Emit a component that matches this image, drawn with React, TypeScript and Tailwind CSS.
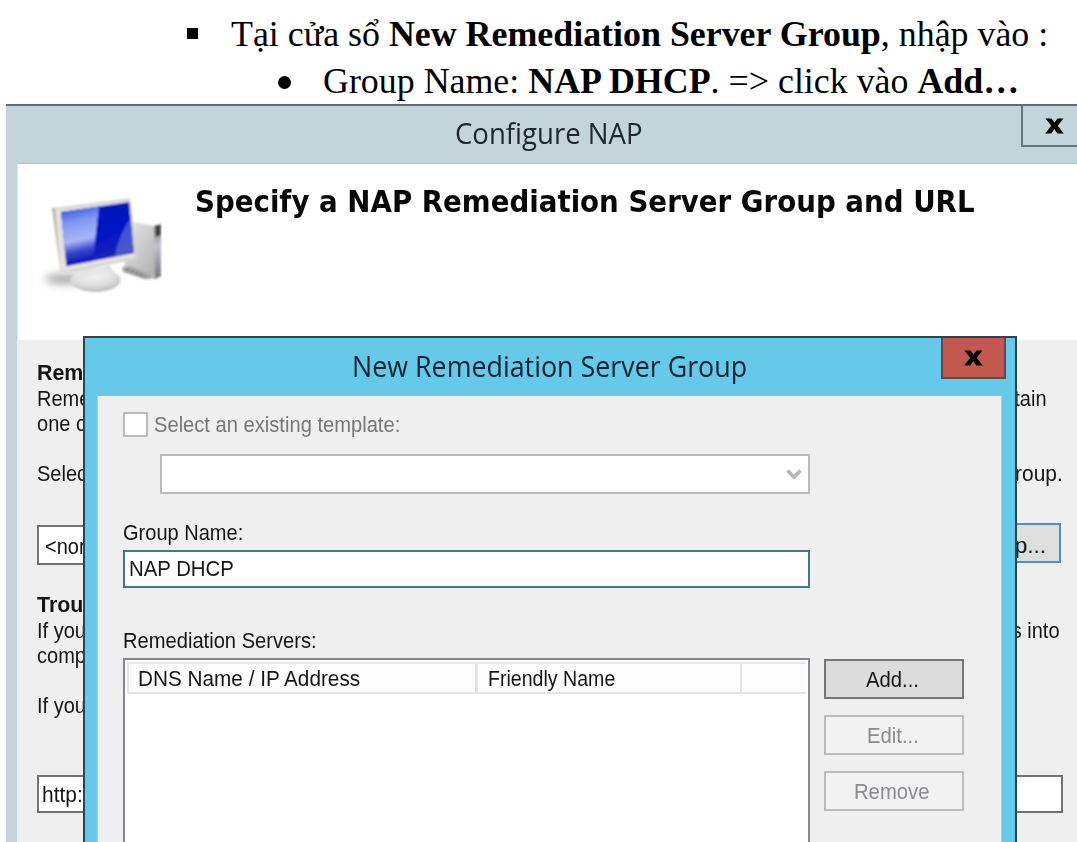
import type { ReactNode } from "react";

function Label({ className = "", children }: { className?: string; children: ReactNode }) {
  return (
    <span
      className={`block h-[25px] origin-left whitespace-pre text-[22.5px] leading-[25px] ${className}`}
    >
      {children}
    </span>
  );
}

function CloseGlyph() {
  return (
    <svg width="19" height="16" viewBox="0 0 19 16" fill="none">
      <path d="M0.5 0.5H6.6L9.5 4.6L12.6 0.5H18.4L12.8 7.8L18.7 15.5H12.4L9.3 11.3L6.2 15.5H0.2L6.2 7.8Z" fill="#050505" />
    </svg>
  );
}

function ComputerIcon() {
  return (
    <svg width="124" height="104" viewBox="0 0 124 104" className="block">
      <defs>
        <linearGradient id="shine" x1="0" y1="0" x2="0.15" y2="1">
          <stop offset="0" stopColor="#2a48d8" />
          <stop offset="0.3" stopColor="#7f98f3" />
          <stop offset="0.62" stopColor="#a9b6f5" />
          <stop offset="0.8" stopColor="#3a48d0" />
          <stop offset="1" stopColor="#0a12b0" />
        </linearGradient>
        <linearGradient id="screen" x1="0" y1="0" x2="0.5" y2="1">
          <stop offset="0" stopColor="#0714b4" />
          <stop offset="0.6" stopColor="#0012c4" />
          <stop offset="1" stopColor="#1a28b8" />
        </linearGradient>
        <linearGradient id="tower" x1="0" y1="0" x2="1" y2="1">
          <stop offset="0" stopColor="#e9e9e9" />
          <stop offset="1" stopColor="#a9a9a9" />
        </linearGradient>
        <linearGradient id="edge" x1="0" y1="0" x2="0" y2="1">
          <stop offset="0" stopColor="#777777" />
          <stop offset="0.4" stopColor="#c3c0cf" />
          <stop offset="1" stopColor="#77757d" />
        </linearGradient>
        <radialGradient id="base" cx="0.45" cy="0.3" r="0.75">
          <stop offset="0" stopColor="#f5f5f5" />
          <stop offset="0.6" stopColor="#dddddd" />
          <stop offset="1" stopColor="#b4b4b4" />
        </radialGradient>
        <filter id="soft" x="-10%" y="-10%" width="120%" height="120%">
          <feGaussianBlur stdDeviation="1" />
        </filter>
        <filter id="shadow" x="-50%" y="-80%" width="200%" height="260%">
          <feGaussianBlur stdDeviation="4" />
        </filter>
      </defs>
      <ellipse cx="27" cy="84" rx="20" ry="5" fill="#777777" opacity="0.65" filter="url(#shadow)" />
      <g filter="url(#soft)">
        <path d="M92 26L116 31L123 29V81L117 84L86 76Z" fill="url(#tower)" />
        <path d="M116 31L123 29V81L117 84Z" fill="url(#edge)" />
        <path d="M117.5 31L122.5 30V40L117.5 42Z" fill="#354039" />
        <path d="M84 72L92 71L113 80V84L106 84L85 77Z" fill="#a5a5a5" />
        <path d="M88 74L108 82" stroke="#777777" strokeWidth="2" strokeDasharray="3 2" />
        <path d="M38 77L72 71L76 79L36 86Z" fill="#d0d0d0" />
        <ellipse cx="57.5" cy="85" rx="25" ry="12" fill="url(#base)" />
        <path d="M37 80C46 73 68 70 76 75L66 79L45 83Z" fill="#e6e6e6" />
        <path d="M14 13L19 12L26 78L23 79Z" fill="#b5b1a8" />
        <path d="M17 13L92 3L99 64L84 67L27 79L23 79Z" fill="#e4e1df" />
        <path d="M19 13.5L91.5 4.5L98 63L27 77" fill="none" stroke="#c8c5c0" strokeWidth="1" />
        <path d="M23 17L91 7L96 58L28.5 71Z" fill="url(#screen)" />
        <path d="M23 17L61 11.5L54.7 66L28.5 71Z" fill="url(#shine)" />
        <path d="M92 24L96 57L77 61C80 46 85 34 92 24Z" fill="#7c8de0" opacity="0.5" />
      </g>
    </svg>
  );
}

function ActionButton({ label, disabled = false }: { label: string; disabled?: boolean }) {
  return (
    <button
      className={
        disabled
          ? "flex h-10 w-[140px] justify-center border-2 border-[#bcbcbc] bg-[#f2f2f2] pt-1.5 pl-1 text-[#8b8b90]"
          : "flex h-10 w-[140px] justify-center border-2 border-[#77777a] bg-[#dcdcdc] pt-1.5 pl-0.5 text-[#151515]"
      }
    >
      <Label className="origin-center scale-x-90">{label}</Label>
    </button>
  );
}

function GroupDialog() {
  return (
    <div className="absolute left-[83px] top-[336px] flex h-[520px] w-[934px] flex-col border-2 border-[#2d444f] bg-[#65caea]">
      <div className="flex h-[57px] shrink-0 items-start">
        <div className="w-[856px] shrink-0 pl-[267px] pt-[8px] font-['Open_Sans',sans-serif] text-[29px] leading-[40px] text-[#06222e]">
          <span className="block w-max origin-left scale-x-[0.925] whitespace-nowrap">New Remediation Server Group</span>
        </div>
        <button className="flex h-[41px] w-[65px] items-center justify-center border-2 border-t-0 border-[#65484b] bg-[#c2584e]">
          <CloseGlyph />
        </button>
      </div>
      <div className="ml-[12px] mr-[13px] flex grow flex-col border border-[#a5d3e1] border-t-[#8dbdce] bg-[#efefef] pl-[25px] pt-4">
        <div className="flex h-[25px] items-center">
          <span className="size-[25px] border-2 border-[#bbbbbb] bg-white" />
          <Label className="ml-1.5 scale-x-[0.895] text-[#77777a]">Select an existing template:</Label>
        </div>
        <div className="ml-[37px] mt-[17px] flex h-10 w-[650px] items-center justify-end border-2 border-[#bbbbbe] bg-white pr-1.5">
          <svg width="16" height="13" viewBox="0 0 16 13" fill="none">
            <path d="M1.5 2.5L8 9L14.5 2.5" stroke="#b7b7b7" strokeWidth="3.8" />
          </svg>
        </div>
        <Label className="mt-[26px] scale-x-[0.89] text-[#151515]">Group Name:</Label>
        <div className="mt-[5px] h-[38px] w-[687px] border-2 border-[#417497] bg-white pl-1 pt-1">
          <Label className="scale-x-[0.905] text-[#151515]">NAP DHCP</Label>
        </div>
        <Label className="mt-[40px] scale-x-[0.895] text-[#151515]">Remediation Servers:</Label>
        <div className="mt-[5px] flex grow gap-[14px]">
          <div className="w-[687px] border-2 border-b-0 border-[#85878f] bg-white p-0.5">
            <div className="flex h-8 border-2 border-r-0 border-[#e6e6e6] bg-[#fcfcfc]">
              <div className="w-[349px] border-r-3 border-[#e3e3e3] pl-[9px] pt-0.5 text-[#151515]">
                <Label className="scale-x-[0.922]">DNS Name / IP Address</Label>
              </div>
              <div className="w-[264px] border-r-2 border-[#e3e3e3] pl-2.5 pt-0.5 text-[#151515]">
                <Label className="scale-x-[0.87]">Friendly Name</Label>
              </div>
            </div>
          </div>
          <div className="flex flex-col gap-4 pt-px">
            <ActionButton label="Add..." />
            <ActionButton label="Edit..." disabled />
            <ActionButton label="Remove" disabled />
          </div>
        </div>
      </div>
    </div>
  );
}

function ConfigureWindow() {
  return (
    <div className="ml-1.5 flex grow flex-col border-t-2 border-[#5f6e73] bg-[#c3d5db]">
      <div className="flex h-[57px] shrink-0">
        <div className="w-[1015px] shrink-0 pl-[449px] pt-[7px] font-['Open_Sans',sans-serif] text-[29px] leading-[40px] text-[#20262a]">
          <span className="block w-max origin-left scale-x-[0.95] whitespace-nowrap">Configure NAP</span>
        </div>
        <button className="flex h-[41px] w-[67px] shrink-0 justify-center border-2 border-t-0 border-[#68747d] pt-[12px]">
          <CloseGlyph />
        </button>
      </div>
      <div className="ml-[11px] flex grow flex-col bg-[#efefef]">
        <div className="flex h-[177px] shrink-0 border-t border-l border-[#b2c3ca] border-l-[#dce7ea] bg-white">
          <div className="w-[177px] shrink-0 pl-[20px] pt-[31px]">
            <ComputerIcon />
          </div>
          <h1 className="h-10 origin-left scale-x-[1.025] whitespace-nowrap pt-[18px] font-['DejaVu_Sans_Condensed','DejaVu_Sans',sans-serif] text-[30px] leading-[40px] font-bold text-[#080808]">
            Specify a NAP Remediation Server Group and URL
          </h1>
        </div>
        <div className="flex flex-col pl-5 pr-[14px] pt-[20px] text-[#151515]">
          <Label className="scale-x-[0.95] font-bold">Remediation</Label>
          <div className="mt-px flex justify-between pr-4">
            <Label className="scale-x-[0.89]">Remediation</Label>
            <Label className="origin-right scale-x-[0.89]">contain</Label>
          </div>
          <Label className="scale-x-[0.89]">one or</Label>
          <div className="mt-[25px] flex justify-between">
            <Label className="scale-x-[0.89]">Select</Label>
            <Label className="origin-right scale-x-[0.93]">group.</Label>
          </div>
          <div className="mt-[37px] flex h-[42px] justify-between pr-0.5">
            <div className="mt-0.5 h-10 w-[400px] border-2 border-[#737377] bg-white pl-1.5 pt-[7px]">
              <Label className="scale-x-[0.89]">&lt;none&gt;</Label>
            </div>
            <div className="flex h-10 w-[200px] justify-end border-2 border-[#4f90c2] bg-[#dedede] pr-[13px] pt-[8px]">
              <Label className="origin-right">Group...</Label>
            </div>
          </div>
          <Label className="mt-[27px] scale-x-[0.95] font-bold">Troubleshooting</Label>
          <div className="mt-px flex justify-between pr-[3px]">
            <Label className="scale-x-[0.89]">If your</Label>
            <Label className="origin-right scale-x-[0.89]">computers into</Label>
          </div>
          <Label className="scale-x-[0.89]">compliance</Label>
          <Label className="mt-[25px] scale-x-[0.89]">If you</Label>
          <div className="mt-[57px] h-[38px] w-[1026px] border-2 border-[#737377] bg-white pl-[3px] pt-[5px]">
            <Label className="scale-x-[0.93]">http://</Label>
          </div>
        </div>
      </div>
    </div>
  );
}

export default function App() {
  return (
    <main className="relative flex h-[842px] w-[1077px] flex-col overflow-hidden bg-white font-['Liberation_Sans',Arial,sans-serif]">
      <div className="flex h-[104px] shrink-0 flex-col pt-[11px] font-['Liberation_Serif','Times_New_Roman',serif] text-[35.88px] leading-[47px] text-black">
        <div className="flex h-[47px] items-start whitespace-nowrap pl-[187px]">
          <span className="mt-[17px] size-[11px] bg-black" />
          <p className="ml-[33px]">
            Tại cửa sổ <b>New Remediation Server Group</b>, nhập vào :
          </p>
        </div>
        <div className="flex h-[45px] items-start whitespace-nowrap pl-[278px]">
          <span className="mt-[18px] size-[13px] rounded-full bg-black" />
          <p className="ml-[32px]">
            Group Name: <b>NAP DHCP</b>. =&gt; click vào <b>Add…</b>
          </p>
        </div>
      </div>
      <ConfigureWindow />
      <GroupDialog />
    </main>
  );
}
